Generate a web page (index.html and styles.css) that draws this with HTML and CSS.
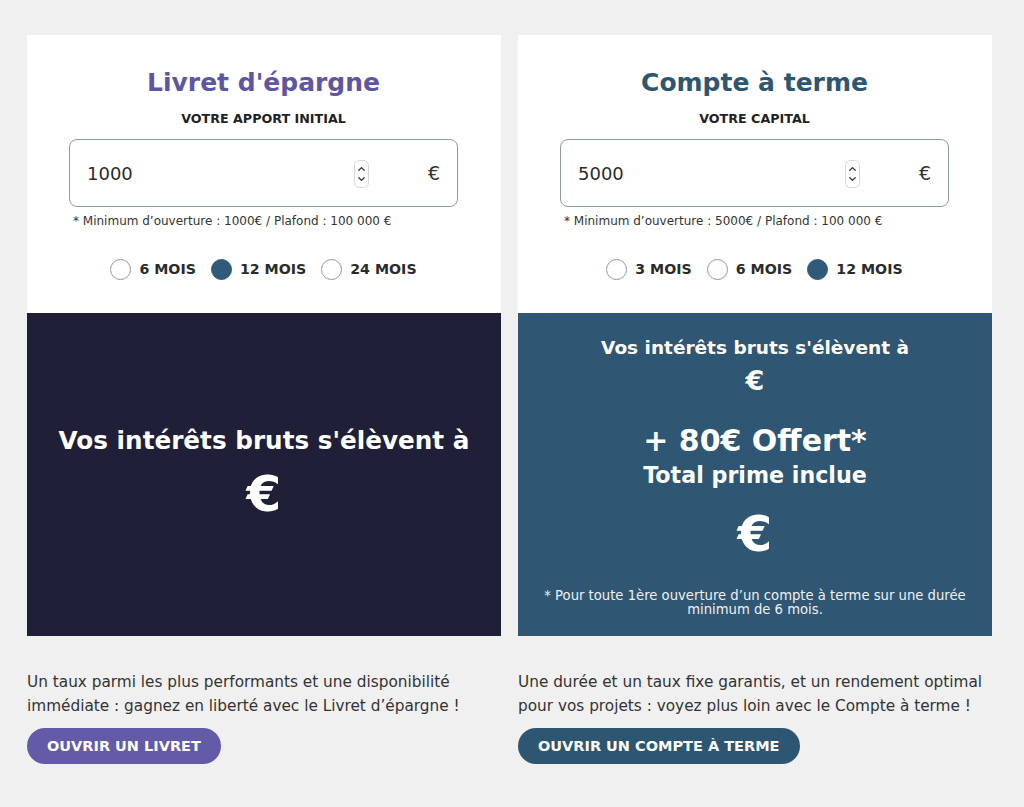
FILE: index.html
```html
<!DOCTYPE html>
<html lang="fr">
<head>
<meta charset="utf-8">
<title>Simulateurs</title>
<link rel="stylesheet" href="styles.css">
</head>
<body>
<div class="page">
  <section class="col">
    <div class="card">
      <div class="form">
        <h2 class="title title-livret">Livret d'épargne</h2>
        <div class="label">VOTRE APPORT INITIAL</div>
        <div class="input">
          <span class="value">1000</span>
          <span class="spin"><svg width="15" height="28" viewBox="0 0 15 28"><rect x="0.5" y="0.5" width="14" height="27" rx="5" fill="#fff" stroke="#d6d6d6"/><path d="M4.8 10.2 L7.5 7.6 L10.2 10.2" fill="none" stroke="#333" stroke-width="1.3" stroke-linecap="round" stroke-linejoin="round"/><path d="M4.8 17.8 L7.5 20.4 L10.2 17.8" fill="none" stroke="#333" stroke-width="1.3" stroke-linecap="round" stroke-linejoin="round"/></svg></span>
          <span class="cur">€</span>
        </div>
        <div class="note">* Minimum d’ouverture : 1000€ / Plafond : 100 000 €</div>
        <div class="radios">
          <span class="radio"><span class="dot"></span>6 MOIS</span>
          <span class="radio"><span class="dot on"></span>12 MOIS</span>
          <span class="radio"><span class="dot"></span>24 MOIS</span>
        </div>
      </div>
      <div class="result result-livret">
        <div class="r-big">Vos intérêts bruts s'élèvent à</div>
        <div class="r-euro">€</div>
      </div>
    </div>
    <p class="desc">Un taux parmi les plus performants et une disponibilité immédiate : gagnez en liberté avec le Livret d’épargne !</p>
    <a class="btn btn-livret" href="#">OUVRIR UN LIVRET</a>
  </section>

  <section class="col">
    <div class="card">
      <div class="form">
        <h2 class="title title-cat">Compte à terme</h2>
        <div class="label">VOTRE CAPITAL</div>
        <div class="input">
          <span class="value">5000</span>
          <span class="spin"><svg width="15" height="28" viewBox="0 0 15 28"><rect x="0.5" y="0.5" width="14" height="27" rx="5" fill="#fff" stroke="#d6d6d6"/><path d="M4.8 10.2 L7.5 7.6 L10.2 10.2" fill="none" stroke="#333" stroke-width="1.3" stroke-linecap="round" stroke-linejoin="round"/><path d="M4.8 17.8 L7.5 20.4 L10.2 17.8" fill="none" stroke="#333" stroke-width="1.3" stroke-linecap="round" stroke-linejoin="round"/></svg></span>
          <span class="cur">€</span>
        </div>
        <div class="note">* Minimum d’ouverture : 5000€ / Plafond : 100 000 €</div>
        <div class="radios">
          <span class="radio"><span class="dot"></span>3 MOIS</span>
          <span class="radio"><span class="dot"></span>6 MOIS</span>
          <span class="radio"><span class="dot on"></span>12 MOIS</span>
        </div>
      </div>
      <div class="result result-cat">
        <div class="r-mid">Vos intérêts bruts s'élèvent à</div>
        <div class="r-small-euro">€</div>
        <div class="r-offer">+ 80€ Offert*</div>
        <div class="r-total">Total prime inclue</div>
        <div class="r-euro r-euro2">€</div>
        <div class="r-foot">* Pour toute 1ère ouverture d’un compte à terme sur une durée minimum de 6 mois.</div>
      </div>
    </div>
    <p class="desc">Une durée et un taux fixe garantis, et un rendement optimal pour vos projets : voyez plus loin avec le Compte à terme !</p>
    <a class="btn btn-cat" href="#">OUVRIR UN COMPTE À TERME</a>
  </section>
</div>
</body>
</html>
```

FILE: styles.css
```css
* { box-sizing: border-box; }
html, body { margin: 0; padding: 0; }
body {
  background: #f0f0f0;
  font-family: "DejaVu Sans", "Liberation Sans", sans-serif;
  color: #2b2b2b;
  width: 1024px;
  height: 807px;
  overflow: hidden;
}
.page {
  display: grid;
  grid-template-columns: 474px 474px;
  column-gap: 17px;
  padding: 35px 0 0 27px;
}
.col { display: flex; flex-direction: column; align-items: flex-start; }
.card { width: 474px; display: flex; flex-direction: column; }
.form {
  background: #fff;
  height: 278px;
  padding: 30px 43px 0 42px;
  display: flex;
  flex-direction: column;
  align-items: stretch;
}
.title {
  margin: 0;
  text-align: center;
  font-size: 25px;
  line-height: 34px;
  font-weight: 700;
  position: relative;
  top: 1px;
}
.title-livret { color: #5f56a3; }
.title-cat { color: #2d5672; }
.label {
  margin-top: 11px;
  text-align: center;
  font-size: 12.7px;
  line-height: 18px;
  font-weight: 700;
  color: #222;
}
.input {
  margin-top: 11px;
  height: 68px;
  border: 1px solid #8d9ba0;
  border-radius: 8px;
  display: flex;
  align-items: center;
  padding: 0 17px 0 17px;
}
.value { flex: 1; font-size: 18px; color: #2b2b2b; }
.spin { display: flex; width: 15px; height: 28px; margin-right: 59px; margin-top: 1px; }
.cur { font-size: 19px; color: #333; }
.note {
  margin-top: 7px;
  padding-left: 4px;
  font-size: 12px;
  line-height: 14px;
  color: #333;
}
.radios {
  margin-top: 30px;
  display: flex;
  justify-content: center;
  gap: 15px;
  height: 22px;
}
.radio {
  display: flex;
  align-items: center;
  gap: 8px;
  font-size: 14.2px;
  font-weight: 700;
  color: #2b2b2b;
}
.dot {
  width: 21px;
  height: 21px;
  border-radius: 50%;
  border: 1px solid #8c979c;
  background: #fff;
}
.dot.on { background: #2f5a7a; border-color: #2f5a7a; }
.result {
  height: 323px;
  color: #fff;
  display: flex;
  flex-direction: column;
  align-items: center;
  text-align: center;
  font-weight: 700;
}
.result-livret { background: #1f2037; justify-content: center; padding-bottom: 2px; }
.result-cat { background: #2f5672; padding: 22px 14px 0; }
.r-big { font-size: 24.7px; line-height: 32px; }
.r-euro { font-size: 50px; line-height: 58px; margin-top: 8px; }
.r-mid { font-size: 18.5px; line-height: 26px; }
.r-small-euro { font-size: 27px; line-height: 32px; margin-top: 4px; }
.r-offer { font-size: 30px; line-height: 36px; margin-top: 26px; }
.r-total { font-size: 22.2px; line-height: 30px; margin-top: 1px; }
.r-euro2 { margin-top: 15px; }
.r-foot {
  margin-top: 26px;
  font-size: 13.2px;
  line-height: 14px;
  font-weight: 400;
  color: #f0f0f0;
}
.desc {
  margin: 34px 0 0;
  width: 474px;
  font-size: 15.3px;
  line-height: 24px;
  color: #333;
}
.btn {
  margin-top: 10px;
  height: 36px;
  padding: 0 20px;
  border-radius: 18px;
  display: inline-flex;
  align-items: center;
  color: #fff;
  text-decoration: none;
  font-size: 14.5px;
  font-weight: 700;
}
.btn-livret { background: #635aa8; }
.btn-cat { background: #2d5672; }
```
